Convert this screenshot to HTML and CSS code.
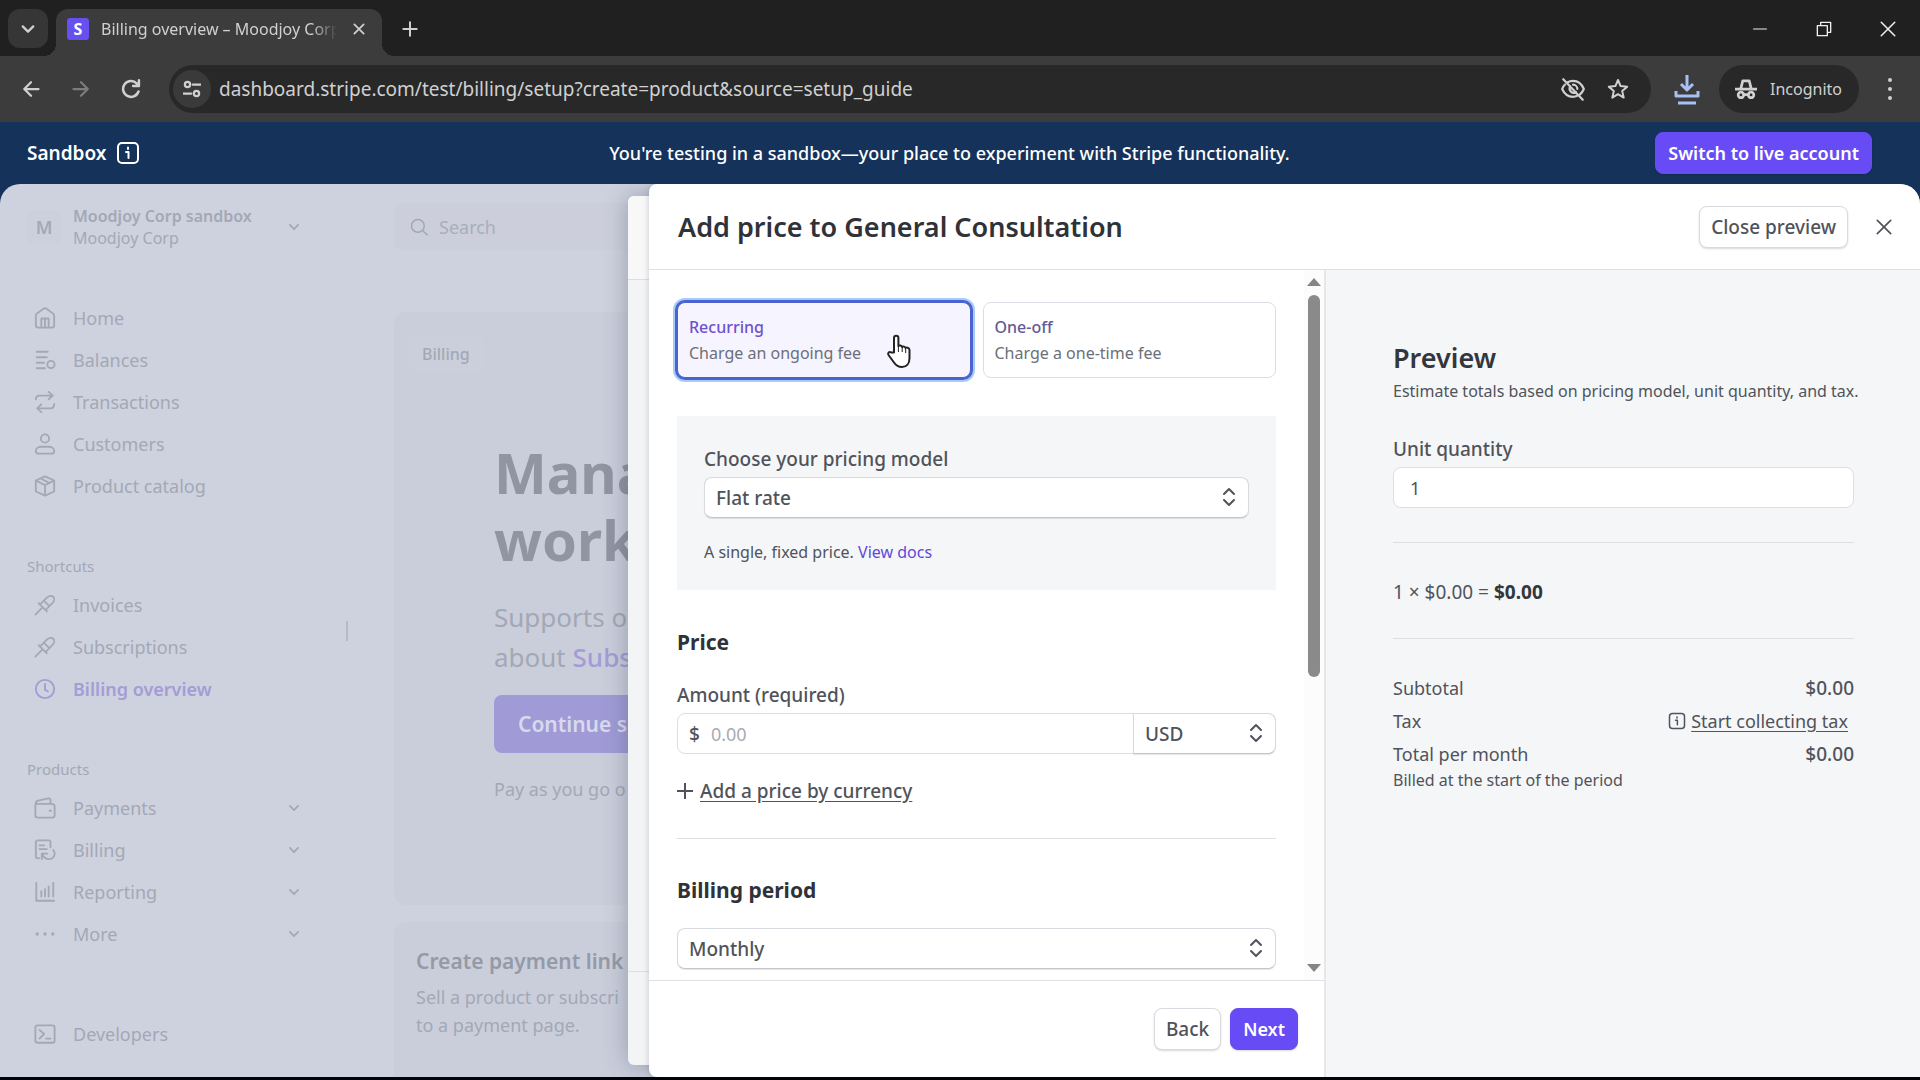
FILE: index.html
```
<!DOCTYPE html>
<html lang="en">
<head>
<meta charset="utf-8">
<title>Billing overview – Moodjoy Corp</title>
<link rel="stylesheet" href="styles.css">
</head>
<body>
<svg class="sprite" aria-hidden="true">
  <symbol id="i-chev" viewBox="0 0 24 24"><path d="M5 8.500l7 7 7-7"/></symbol>
  <symbol id="i-updown" viewBox="0 0 14 20"><path d="M2 7l5-5 5 5M2 13l5 5 5-5"/></symbol>
  <symbol id="i-x" viewBox="0 0 24 24"><path d="M4 4l16 16M20 4L4 20"/></symbol>
  <symbol id="i-pin" viewBox="0 0 24 24"><path d="M1.500 22.500l7-7M5 10l9 9M6.500 11.500L14 4c2.500-2.500 5.500-2.500 7-1s1.500 4.500-1 7l-7.500 7.500M11 7.500l5.500 5.500"/></symbol>
  <symbol id="i-info" viewBox="0 0 24 24"><rect x="2" y="2" width="20" height="20" rx="4"/><path d="M10 11h2.500v6M12 6.500v1.500"/></symbol>
</svg>

<header class="browser">
  <div class="tabs">
    <button class="tab-search" aria-label="Search tabs"><svg class="ic s18 w3"><use href="#i-chev"/></svg></button>
    <div class="tab">
      <span class="favicon">S</span>
      <span class="tab-title">Billing overview – Moodjoy Corp</span>
      <button class="plain" aria-label="Close tab"><svg class="ic s14 w3"><use href="#i-x"/></svg></button>
    </div>
    <button class="plain new-tab" aria-label="New tab"><svg class="ic s16 w3" viewBox="0 0 24 24"><path d="M12 2v20M2 12h20"/></svg></button>
    <div class="window-controls">
      <button class="plain" aria-label="Minimize"><svg class="ic s14 w2" viewBox="0 0 24 24"><path d="M1 12h22"/></svg></button>
      <button class="plain" aria-label="Restore"><svg class="ic s16 w2" viewBox="0 0 24 24"><path d="M2 7h15v15H2zM7 7V2h15v15h-5"/></svg></button>
      <button class="plain" aria-label="Close window"><svg class="ic s18 w2" viewBox="0 0 24 24"><path d="M3 3l18 18M21 3L3 21"/></svg></button>
    </div>
  </div>
  <div class="toolbar">
    <button class="plain nav-btn" aria-label="Back"><svg class="ic s18 w3" viewBox="0 0 24 24"><path d="M22 12H3M12 3l-9 9 9 9"/></svg></button>
    <button class="plain nav-btn off" aria-label="Forward"><svg class="ic s18 w3" viewBox="0 0 24 24"><path d="M2 12h19M12 3l9 9-9 9"/></svg></button>
    <button class="plain nav-btn" aria-label="Reload"><svg class="ic s20 w3" viewBox="0 0 24 24"><path d="M21 15a9.500 9.500 0 1 1-2-9.500l2 2.500M21.500 1.500V8.500H14.500"/></svg></button>
    <div class="omnibox">
      <span class="site-info"><svg class="ic s18 w3" viewBox="0 0 24 24"><circle cx="6" cy="6" r="3.500"/><path d="M13 6h10M1 18h10"/><circle cx="18" cy="18" r="3.500"/></svg></span>
      <input class="url" aria-label="Address" value="dashboard.stripe.com/test/billing/setup?create=product&amp;source=setup_guide">
      <svg class="ic s26 w2" viewBox="0 0 24 24"><path d="M3 3l18 19M7 5.800A10 10 0 0 1 12 4.500c4.500 0 8 2.700 10 7.500-.8 2-2 3.600-3.500 4.900M15.500 18.500A10 10 0 0 1 12 19.200c-4.500 0-8-2.700-10-7.200.6-1.600 1.500-3 2.600-4.100M9.500 9.500a4 4 0 0 0 5.500 5.500M12 8a4 4 0 0 1 4 4"/></svg>
      <svg class="ic s24 w2" viewBox="0 0 24 24"><path d="M12 3l2.600 6.100 6.600.6-5 4.400 1.500 6.500L12 17.200l-5.700 3.400 1.500-6.500-5-4.400 6.600-.6z"/></svg>
    </div>
    <button class="plain download" aria-label="Downloads"><svg class="ic w3" width="26" height="32" viewBox="0 0 26 32"><path d="M13 2v13M7 11l6 6 6-6M2 18v5h22v-5M4 30h18"/></svg></button>
    <div class="incognito"><svg class="ic s22 w3" viewBox="0 0 24 24"><path d="M1 12h22"/><path d="M6.500 11L8.500 3h7l2 8"/><circle cx="6.500" cy="18.500" r="3"/><circle cx="17.500" cy="18.500" r="3"/><path d="M9.500 18h5"/></svg>Incognito</div>
    <button class="plain kebab" aria-label="Menu"><svg class="dots" width="6" height="24" viewBox="0 0 6 24"><circle cx="3" cy="3" r="2"/><circle cx="3" cy="12" r="2"/><circle cx="3" cy="21" r="2"/></svg></button>
  </div>
</header>

<div class="banner">
  <div class="banner-left">Sandbox <svg class="ic s24 w2"><use href="#i-info"/></svg></div>
  <p>You're testing in a sandbox—your place to experiment with Stripe functionality.</p>
  <div class="banner-right"><button class="btn primary">Switch to live account</button></div>
</div>

<div class="app">
  <aside class="sidebar">
    <div class="account">
      <span class="avatar">M</span>
      <span class="account-name"><b>Moodjoy Corp sandbox</b><span>Moodjoy Corp</span></span>
      <svg class="ic s14 w3"><use href="#i-chev"/></svg>
    </div>
    <nav>
      <a href="#"><svg class="ic s22 w2" viewBox="0 0 24 24"><path d="M2 9.500c0-1 .5-2 1.300-2.500l7-5c1-.7 2.400-.7 3.400 0l7 5c.8.500 1.300 1.500 1.300 2.500V20a2.500 2.500 0 0 1-2.500 2.500h-15A2.500 2.500 0 0 1 2 20zM8 22v-9.500h8V22M12 13v9"/></svg>Home</a>
      <a href="#"><svg class="ic s22 w2" viewBox="0 0 24 24"><path d="M3 3h12M3 9h11M3 15h8M3 21h9"/><circle cx="18.500" cy="17" r="4"/></svg>Balances</a>
      <a href="#"><svg class="ic s22 w2" viewBox="0 0 24 24"><path d="M2 9c0-2.500 1.500-4 4-4h14M16 1l4.500 4L16 9M22 14c0 3-1.500 5-4 5H4M8 14.500L3.500 19 8 23"/></svg>Transactions</a>
      <a href="#"><svg class="ic s22 w2" viewBox="0 0 24 24"><circle cx="12" cy="6" r="4.500"/><path d="M2 19.500c0-3 3-4.500 6-4.500h8c3 0 6 1.500 6 4.500 0 1.700-1 3-3 3H5c-2 0-3-1.300-3-3z"/></svg>Customers</a>
      <a href="#"><svg class="ic s22 w2" viewBox="0 0 24 24"><path d="M12 1.500l10 4.500v12l-10 4.500L2 18V6zM2 6l10 5 10-5M12 11v11.500M7 3.700l10 5"/></svg>Product catalog</a>
    </nav>
    <h2>Shortcuts</h2>
    <nav>
      <a href="#"><svg class="ic s22 w2"><use href="#i-pin"/></svg>Invoices</a>
      <a href="#"><svg class="ic s22 w2"><use href="#i-pin"/></svg>Subscriptions</a>
      <a href="#" class="current"><svg class="ic s22 w2" viewBox="0 0 24 24"><circle cx="12" cy="12" r="10"/><path d="M12 6.500V13l3 1.500"/></svg>Billing overview</a>
    </nav>
    <h2>Products</h2>
    <nav>
      <a href="#"><svg class="ic s22 w2" viewBox="0 0 24 24"><path d="M1.500 7.500h18a3 3 0 0 1 3 3V20a2.500 2.500 0 0 1-2.500 2.500H4A2.500 2.500 0 0 1 1.500 20zM2 7c0-1.500.8-2.500 2.500-3l11-2.500c1.500-.3 2.500.5 2.500 2v3.500M17 15h1.500"/></svg>Payments<svg class="ic s14 w3"><use href="#i-chev"/></svg></a>
      <a href="#"><svg class="ic s22 w2" viewBox="0 0 24 24"><path d="M18 9V3.500a2 2 0 0 0-2-2H4a2 2 0 0 0-2 2V19a2 2 0 0 0 2 2h1.500M6 7h5M6 11h8M8.500 22v-6h6M9 16.500c1.500 3.500 4 5.500 7.500 5.500 3.200 0 6-2.500 6-6 0-1.500-.5-3-1.500-4"/></svg>Billing<svg class="ic s14 w3"><use href="#i-chev"/></svg></a>
      <a href="#"><svg class="ic s22 w2" viewBox="0 0 24 24"><path d="M2.500 2v19.500H22M8 11v6M12 9v8M16 6v11M21 2v15"/></svg>Reporting<svg class="ic s14 w3"><use href="#i-chev"/></svg></a>
      <a href="#"><svg class="dots s22" viewBox="0 0 24 24"><circle cx="3.500" cy="12" r="1.800"/><circle cx="12" cy="12" r="1.800"/><circle cx="20.500" cy="12" r="1.800"/></svg>More<svg class="ic s14 w3"><use href="#i-chev"/></svg></a>
    </nav>
    <nav class="dev">
      <a href="#"><svg class="ic s22 w2" viewBox="0 0 24 24"><rect x="1.500" y="2.500" width="21" height="19" rx="2.500"/><path d="M6 7.500l5 4.500-5 5M13 17h5"/></svg>Developers</a>
    </nav>
  </aside>
  <div class="resize-handle"></div>

  <main class="overview">
    <div class="search"><svg class="ic s18 w2" viewBox="0 0 24 24"><circle cx="10.500" cy="10.500" r="8.500"/><path d="M17 17l6 5.500"/></svg><input aria-label="Search" placeholder="Search"></div>
    <section class="hero">
      <span class="badge">Billing</span>
      <div class="hero-text">
        <h1>Mana<br>work</h1>
        <p class="lead">Supports o<br>about <a href="#">Subs</a></p>
        <button class="hero-btn">Continue s</button>
        <p>Pay as you go o</p>
      </div>
    </section>
    <section class="links-card">
      <h3>Create payment link</h3>
      <p>Sell a product or subscri<br>to a payment page.</p>
    </section>
  </main>

  <div class="drawer-back"><div class="back-head"></div><div class="back-foot"></div></div>

  <section class="drawer">
    <header class="drawer-head">
      <h1>Add price to General Consultation</h1>
      <button class="btn">Close preview</button>
      <button class="plain" aria-label="Close"><svg class="ic s20 w2"><use href="#i-x"/></svg></button>
    </header>
    <div class="drawer-body">
      <div class="editor">
        <div class="scroller">
          <form class="form" id="price-form">
            <div class="types">
              <label class="type selected"><input type="radio" name="type" checked><b>Recurring</b><span>Charge an ongoing fee</span>
                <svg class="cursor" width="26" height="34" viewBox="0 0 26 34"><path d="M8 18.500V4a2.200 2.200 0 0 1 4.400 0v8c1-.8 3.300-.6 3.700.9 1.200-.7 3-.3 3.400 1 1.600-.8 4 .2 4 2.300V24c0 5.500-3 9-7.500 9-4 0-6-1.500-8-4.500L2.500 21c-1.200-2 .8-3.600 2.500-2.600z"/><path class="thin" d="M12.400 12v6M16.200 13v5M19.700 14v5"/></svg>
              </label>
              <label class="type"><input type="radio" name="type"><b>One-off</b><span>Charge a one-time fee</span></label>
            </div>
            <div class="model">
              <label for="model">Choose your pricing model</label>
              <div class="select"><select id="model"><option>Flat rate</option></select><svg class="ic w2" width="14" height="20"><use href="#i-updown"/></svg></div>
              <p>A single, fixed price. <a href="#">View docs</a></p>
            </div>
            <h2>Price</h2>
            <label class="amount-label" for="amount">Amount (required)</label>
            <div class="amount">
              <span>$</span><input id="amount" placeholder="0.00">
              <div class="select"><select aria-label="Currency"><option>USD</option></select><svg class="ic w2" width="14" height="20"><use href="#i-updown"/></svg></div>
            </div>
            <button type="button" class="add-currency"><svg class="ic s16 w3" viewBox="0 0 24 24"><path d="M12 0v24M0 12h24"/></svg><span>Add a price by currency</span></button>
            <hr>
            <h2 class="period-title" id="period">Billing period</h2>
            <div class="select"><select aria-labelledby="period"><option>Monthly</option></select><svg class="ic w2" width="14" height="20"><use href="#i-updown"/></svg></div>
          </form>
          <div class="scrollbar"><i class="up"></i><i class="thumb"></i><i class="down"></i></div>
        </div>
        <footer class="drawer-foot"><button class="btn">Back</button><button class="btn primary">Next</button></footer>
      </div>
      <aside class="preview">
        <h2>Preview</h2>
        <p class="sub">Estimate totals based on pricing model, unit quantity, and tax.</p>
        <label for="qty">Unit quantity</label>
        <input id="qty" value="1">
        <p class="equation">1 × $0.00 = <b>$0.00</b></p>
        <dl>
          <div><dt>Subtotal</dt><dd>$0.00</dd></div>
          <div class="tax"><dt>Tax</dt><dd><svg class="ic s18 w2"><use href="#i-info"/></svg><a href="#">Start collecting tax</a></dd></div>
          <div><dt>Total per month</dt><dd>$0.00</dd></div>
        </dl>
        <p class="sub billed">Billed at the start of the period</p>
      </aside>
    </div>
  </section>
</div>
</body>
</html>
```
FILE: styles.css
```
* { box-sizing: border-box; }

body {
  margin: 0;
  height: 100vh;
  display: flex;
  flex-direction: column;
  overflow: hidden;
  background: #14325a;
  border-bottom: 3px solid #02040a;
  font: 18px/24px "Noto Sans", sans-serif;
  color: #50535a;
}

h1, h2, h3, p, dl, dd { margin: 0; }
button, input, select { font: inherit; color: inherit; margin: 0; }
button { cursor: pointer; }
a { color: inherit; }

.sprite { position: absolute; width: 0; height: 0; }
.ic { flex: none; display: block; fill: none; stroke: currentColor; stroke-linecap: round; stroke-linejoin: round; }
.dots { flex: none; display: block; fill: currentColor; }
.s14 { width: 14px; height: 14px; }
.s16 { width: 16px; height: 16px; }
.s18 { width: 18px; height: 18px; }
.s20 { width: 20px; height: 20px; }
.s22 { width: 22px; height: 22px; }
.s24 { width: 24px; height: 24px; }
.s26 { width: 26px; height: 26px; }
.w2 { stroke-width: 2; }
.w3 { stroke-width: 3; }

.plain {
  display: flex;
  align-items: center;
  justify-content: center;
  padding: 0;
  border: 0;
  background: none;
}

.btn {
  height: 42px;
  padding: 0 11px;
  border: 1px solid #d8dae0;
  border-radius: 8px;
  background: #fff;
  box-shadow: 0 1px 2px #00000026;
  font-size: 19px;
  font-weight: 500;
  white-space: nowrap;
}
.btn.primary {
  padding: 0 12px;
  border-color: #674cf5;
  background: #674cf5;
  color: #fff;
  font-size: 18px;
  font-weight: 600;
}

/* Browser chrome */
.browser { flex: none; background: #3c3c3c; color: #d0d0d0; }
.tabs {
  display: flex;
  height: 56px;
  padding: 9px 0 0 8px;
  background: #202020;
}
.tab-search {
  display: flex;
  align-items: center;
  justify-content: center;
  width: 40px;
  height: 39px;
  padding: 0;
  border: 0;
  border-radius: 12px;
  background: #363636;
}
.tab {
  position: relative;
  display: flex;
  align-items: center;
  gap: 12px;
  width: 326px;
  margin-left: 8px;
  padding: 0 16px 7px 11px;
  border-radius: 12px 12px 0 0;
  background: #3c3c3c;
  font-size: 16px;
}
.tab::before, .tab::after {
  content: "";
  position: absolute;
  bottom: 0;
  width: 12px;
  height: 12px;
}
.tab::before { right: 100%; background: radial-gradient(circle at 0 0, #202020 12px, #3c3c3c 12px); }
.tab::after { left: 100%; background: radial-gradient(circle at 100% 0, #202020 12px, #3c3c3c 12px); }
.favicon {
  flex: none;
  width: 22px;
  height: 22px;
  border-radius: 3px;
  background: #6650f0;
  color: #fff;
  font-weight: 700;
  line-height: 22px;
  text-align: center;
}
.tab-title {
  flex: 1;
  overflow: hidden;
  white-space: nowrap;
  -webkit-mask-image: linear-gradient(to right, #000 88%, transparent 99%);
  mask-image: linear-gradient(to right, #000 88%, transparent 99%);
}
.new-tab { width: 56px; height: 39px; }
.window-controls { display: flex; margin-left: auto; height: 39px; }
.window-controls .plain { width: 64px; color: #f0f0f0; }

.toolbar { display: flex; align-items: center; height: 66px; padding: 0 10px 0 6px; }
.nav-btn { width: 50px; height: 40px; }
.off { color: #7c7c7c; }
.omnibox {
  flex: 1;
  display: flex;
  align-items: center;
  gap: 20px;
  height: 48px;
  margin-left: 13px;
  padding: 0 21px 0 4px;
  border-radius: 24px;
  background: #282828;
}
.site-info {
  display: flex;
  align-items: center;
  justify-content: center;
  width: 38px;
  height: 38px;
  border-radius: 50%;
  background: #3a3a3a;
}
.url { flex: 1; min-width: 0; padding: 0; margin-left: -12px; border: 0; background: none; outline: 0; font-size: 19px; }
.download { width: 44px; margin-left: 14px; color: #a8c0f4; }
.download svg { stroke-linecap: butt; }
.incognito {
  display: flex;
  align-items: center;
  gap: 13px;
  height: 48px;
  margin-left: 10px;
  padding: 0 17px 0 16px;
  border-radius: 24px;
  background: #282828;
  font-size: 16px;
}
.kebab { width: 40px; margin-left: 11px; }

/* Sandbox banner */
.banner {
  flex: none;
  display: grid;
  grid-template-columns: 1fr auto 1fr;
  align-items: center;
  height: 62px;
  padding: 0 48px 0 27px;
  color: #fff;
  font-weight: 500;
}
.banner-left { display: flex; align-items: center; gap: 10px; font-size: 19px; font-weight: 600; }
.banner-right { display: flex; justify-content: flex-end; }

/* Dimmed dashboard */
.app {
  position: relative;
  flex: 1;
  min-height: 0;
  display: flex;
  overflow: hidden;
  border-radius: 20px 20px 0 0;
  background: #ced2de;
  color: #a3a8b5;
}
.sidebar { flex: none; width: 344px; padding: 21px 43px 0 27px; }
.account { display: flex; align-items: center; margin-bottom: 48px; }
.avatar {
  width: 34px;
  height: 34px;
  margin-right: 12px;
  border-radius: 6px;
  background: #ccd0dc;
  font-weight: 600;
  line-height: 34px;
  text-align: center;
}
.account-name { flex: 1; display: flex; flex-direction: column; font-size: 16px; line-height: 22px; white-space: nowrap; }
.account-name b { font-weight: 600; }
.sidebar nav a {
  display: flex;
  align-items: center;
  gap: 17px;
  height: 42px;
  padding-left: 7px;
  text-decoration: none;
}
.sidebar nav a .s14 { margin-left: auto; color: #a3a8b5; }
.sidebar h2 { margin: 47px 0 6px; font-size: 15px; font-weight: 400; line-height: 24px; }
.sidebar .current { color: #a39cd6; font-weight: 600; }
.dev { margin-top: 58px; }
.resize-handle { flex: none; align-self: center; width: 2px; height: 20px; margin: 0 2px; background: #b6bac7; }

.overview { flex: 1; min-width: 0; padding: 19px 40px 0 44px; white-space: nowrap; }
.search {
  display: flex;
  align-items: center;
  gap: 11px;
  height: 47px;
  padding-left: 16px;
  border-radius: 8px;
  background: #cccfdb;
}
.search input { padding: 0; border: 0; background: none; }
.search input::placeholder { color: #a9aebb; opacity: 1; }
.hero { margin-top: 62px; height: 593px; padding: 25px 15px; border-radius: 12px; background: #cacedb; }
.badge {
  display: inline-block;
  padding: 0 13px;
  border-radius: 4px;
  background: #cbcfdb;
  font-size: 16px;
  font-weight: 500;
  line-height: 34px;
}
.hero-text { padding: 68px 0 0 85px; }
.hero h1 { font-size: 56px; line-height: 67px; color: #8f95a1; }
.hero .lead { margin-top: 24px; font-size: 26px; line-height: 40px; }
.lead a { color: #a39cd6; font-weight: 500; text-decoration: none; }
.hero-btn {
  display: block;
  height: 58px;
  margin: 18px 0 24px;
  padding: 0 24px;
  border: 0;
  border-radius: 8px;
  background: #a09bd6;
  color: #d8daec;
  font-size: 21px;
  font-weight: 600;
}
.links-card { margin-top: 17px; height: 300px; padding: 25px 22px; border-radius: 12px; background: #cacedb; }
.links-card h3 { font-size: 21px; font-weight: 600; line-height: 28px; color: #949aa6; }
.links-card p { margin-top: 8px; line-height: 28px; }

/* Stacked drawers lie over the dashboard */
.drawer-back {
  position: absolute;
  top: 12px;
  bottom: 12px;
  left: 628px;
  width: 60px;
  display: flex;
  flex-direction: column;
  justify-content: space-between;
  border-radius: 6px;
  background: #f3f4f6;
  box-shadow: 0 0 24px #3c425a60;
}
.back-head { height: 84px; border-bottom: 1px solid #dcdee2; background: #f8f8f9; border-radius: 6px 0 0; }
.back-foot { height: 94px; border-top: 1px solid #dcdee2; }
.drawer {
  position: absolute;
  inset: 0 0 0 649px;
  display: flex;
  flex-direction: column;
  border-radius: 8px 0 0 8px;
  background: #fff;
  box-shadow: 0 0 6px #3c425a40;
  color: #50535a;
  overflow: hidden;
}
.drawer-head {
  flex: none;
  display: flex;
  align-items: center;
  height: 86px;
  padding: 0 26px 0 29px;
  border-bottom: 1px solid #dfe0e4;
}
.drawer-head h1 { flex: 1; font-size: 27px; font-weight: 600; line-height: 36px; color: #2f3238; }
.drawer-head .plain { margin-left: 26px; }
.drawer-body { flex: 1; min-height: 0; display: flex; }
.editor { flex: none; width: 677px; display: flex; flex-direction: column; border-right: 2px solid #e6e7ea; }
.scroller { flex: 1; min-height: 0; display: flex; }
.form { flex: 1; padding: 32px 28px 0 28px; overflow: hidden; font-size: 19px; font-weight: 500; }
.form label { display: block; }

.types { display: grid; grid-template-columns: 1fr 1fr; gap: 12px; margin-bottom: 38px; }
.type {
  position: relative;
  height: 76px;
  padding: 11px;
  border: 1px solid #dcdde6;
  border-radius: 8px;
  color: #6c6f7a;
  font-size: 16px;
  line-height: 26px;
}
.type input { position: absolute; opacity: 0; }
.type b { display: block; font-weight: 500; color: #625a94; }
.type span { display: block; font-weight: 400; }
.type.selected {
  border-color: #4c62d0;
  background: #f6f4fe;
  box-shadow: 0 0 0 2px #4c62d0, 0 0 0 4px #a5cdfa;
}
.type.selected b { color: #6f50d0; }
.cursor { position: absolute; left: 208px; top: 31px; fill: #fff; stroke: #222; stroke-width: 2; stroke-linejoin: round; }
.thin { fill: none; stroke-width: 1; }

.model { padding: 31px 27px 26px; background: #f5f6f8; }
.model .select { margin-top: 6px; }
.model p { margin-top: 22px; font-size: 16px; font-weight: 400; }
.model p a { color: #6248dc; text-decoration: none; }

.select { position: relative; }
.select select {
  display: block;
  width: 100%;
  height: 41px;
  padding: 0 11px;
  appearance: none;
  border: 1px solid #d8dae0;
  border-bottom-color: #c4c6cc;
  border-radius: 8px;
  background: #fff;
  box-shadow: 0 1px 1px #0000001a;
}
.select svg { position: absolute; right: 13px; top: 10px; pointer-events: none; }

.form h2 { margin-top: 38px; font-size: 21px; line-height: 28px; color: #2f3238; }
.form .amount-label { margin: 27px 0 6px; }
.amount {
  display: flex;
  align-items: center;
  gap: 11px;
  height: 41px;
  padding-left: 11px;
  border: 1px solid #dcdee4;
  border-radius: 8px;
}
.amount input { flex: 1; min-width: 0; padding: 0; border: 0; outline: 0; font-size: 18px; font-weight: 400; background: none; }
.amount input::placeholder { color: #a8abb3; opacity: 1; }
.amount .select { width: 143px; margin-right: -1px; }
.amount select { border-radius: 0 8px 8px 0; }
.add-currency {
  display: flex;
  align-items: center;
  gap: 7px;
  height: 24px;
  margin-top: 25px;
  padding: 0;
  border: 0;
  background: none;
}
.add-currency span { text-decoration: underline; text-underline-offset: 3px; }
hr { margin: 35px 0 0; border: 0; border-top: 1px solid #dddfe3; }
.form .period-title { margin: 37px 0 24px; }

.scrollbar { flex: none; width: 20px; display: flex; flex-direction: column; align-items: center; padding: 8px 0; background: #fcfcfc; }
.up, .down { border: 7px solid transparent; }
.up { border-top: 0; border-bottom: 8px solid #858585; }
.down { margin-top: auto; border-bottom: 0; border-top: 8px solid #858585; }
.thumb { width: 12px; height: 55%; margin-top: 9px; border-radius: 6px; background: #8a8a8a; }

.drawer-foot {
  flex: none;
  display: flex;
  align-items: center;
  justify-content: flex-end;
  gap: 9px;
  height: 97px;
  padding-right: 26px;
  border-top: 1px solid #dfe0e4;
}

.preview { flex: 1; min-width: 0; padding: 72px 66px 0 67px; background: #f5f6f8; }
.preview h2 { font-size: 27px; font-weight: 600; line-height: 32px; color: #33363d; }
.preview .sub { margin-top: 5px; font-size: 16px; white-space: nowrap; }
.preview label { display: block; margin: 34px 0 6px; font-size: 19px; font-weight: 500; }
.preview input {
  display: block;
  width: 100%;
  height: 41px;
  padding: 0 16px;
  border: 1px solid #dcdee4;
  border-radius: 8px;
  background: #fff;
}
.equation {
  margin-top: 34px;
  padding: 37px 0 34px;
  border: solid #dddfe3;
  border-width: 1px 0;
  font-size: 19px;
}
.equation b { color: #33363d; }
.preview dl { margin-top: 37px; display: grid; gap: 9px; }
.preview dl div { display: flex; justify-content: space-between; }
.preview dd { display: flex; align-items: center; gap: 5px; font-size: 19px; font-weight: 500; }
.preview .tax dd { padding-right: 6px; font-size: 18px; font-weight: 400; }
.tax a { text-underline-offset: 3px; }
.preview .billed { margin-top: 2px; }
```
